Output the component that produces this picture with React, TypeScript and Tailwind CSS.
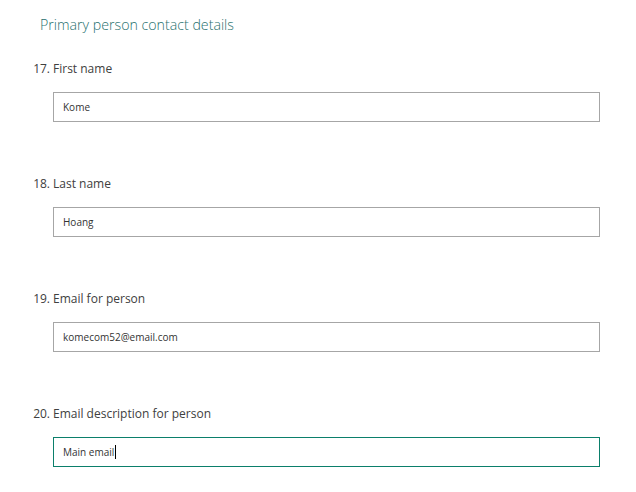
const fields = [
  { num: "17.", label: "First name", value: "Kome" },
  { num: "18.", label: "Last name", value: "Hoang" },
  { num: "19.", label: "Email for person", value: "komecom52@email.com" },
  { num: "20.", label: "Email description for person", value: "Main email", focused: true },
];

export default function App() {
  return (
    <div className="min-h-[492px] w-[636px] bg-white pt-[14px] font-['Segoe_UI','Open_Sans',sans-serif]">
      <h1 className="pl-[40px] text-[14.2px] font-light leading-[22px] text-[#1f706e]">Primary person contact details</h1>
      <div className="mt-[23px] flex flex-col gap-[52px]">
        {fields.map((f) => (
          <div key={f.num}>
            <div className="flex text-[12px] leading-[20px] text-[#404040]">
              <span className="w-[53px] pr-[3px] text-right">{f.num}</span>
              <span>{f.label}</span>
            </div>
            <div
              className={
                "ml-[53px] mt-[13px] flex h-[30px] w-[547px] items-center px-[9px] text-[10px] text-[#333333] " +
                (f.focused ? "border border-[#0b7f6b]" : "border border-[#a6a6a6]")
              }
            >
              <span>{f.value}</span>
              {f.focused ? <span className="ml-[1px] inline-block h-[14px] w-[1px] bg-black" /> : null}
            </div>
          </div>
        ))}
      </div>
    </div>
  );
}
